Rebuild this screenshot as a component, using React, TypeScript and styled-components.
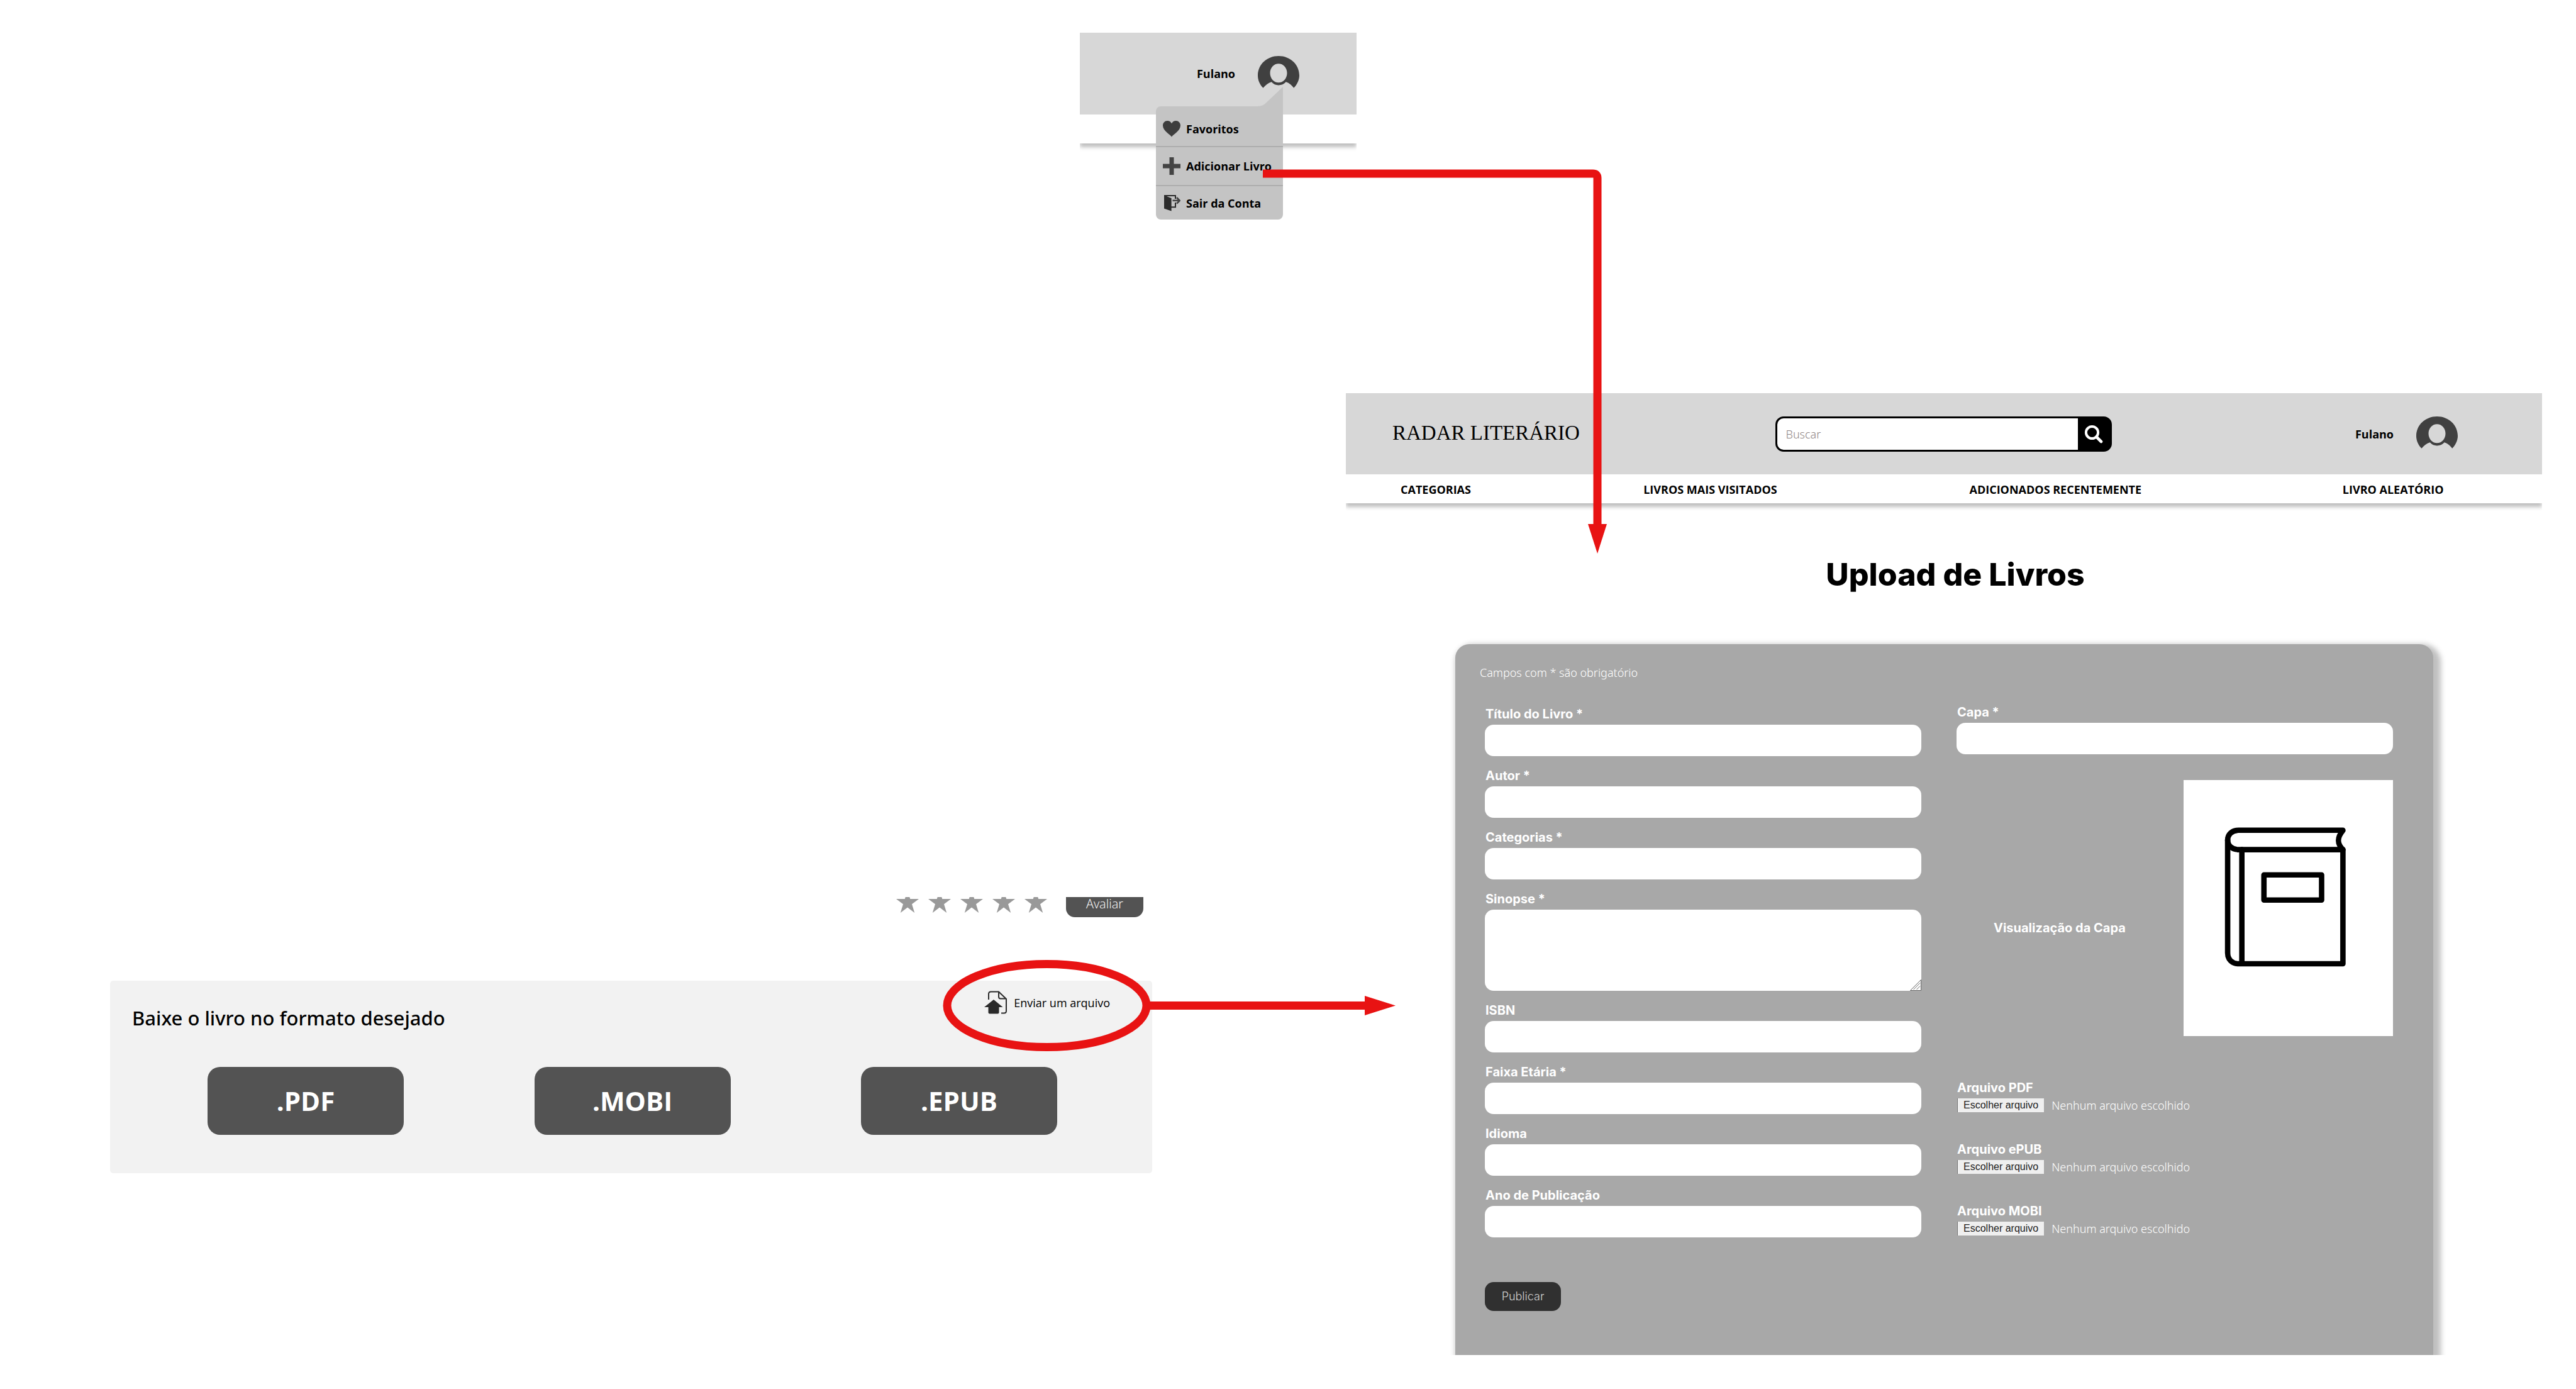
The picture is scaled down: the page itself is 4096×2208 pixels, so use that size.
import React, { useRef, useState } from "react";
import styled, { createGlobalStyle } from "styled-components";

const sans = `"Open Sans", "Noto Sans", sans-serif`;
const humanist = `"Noto Sans", "Open Sans", sans-serif`;
const grotesk = `Inter, "Liberation Sans", sans-serif`;
const red = "#e81313";

const GlobalStyle = createGlobalStyle`
  *, *::before, *::after { box-sizing: border-box; }
  body { margin: 0; background: #fff; color: #000; font-family: ${sans}; font-size: 18px; line-height: 24px; }
  h1, h2, p, ul { margin: 0; padding: 0; }
  ul { list-style: none; }
  button, input, textarea { font: inherit; margin: 0; border: 0; }
  button { cursor: pointer; }
  a { color: inherit; text-decoration: none; }
  svg { display: block; flex: none; }
`;

/* ---------- board ---------- */

const Board = styled.main`
  position: relative;
  display: grid;
  grid-template-columns:
    minmax(0, 175fr) minmax(0, 1542fr) minmax(0, 115fr) minmax(0, 308fr)
    minmax(0, 17fr) minmax(0, 1885fr) minmax(0, 54fr);
  grid-template-rows: 573px auto;
  padding: 52px 0 54px;
`;

const MenuFrame = styled.section`
  grid-column: 3 / 6;
  grid-row: 1;
`;

const PageFrame = styled.section`
  grid-column: 5 / 7;
  grid-row: 2;
`;

const DownloadFrame = styled.section`
  grid-column: 2 / 4;
  grid-row: 2;
  padding-top: 801px;
`;

const Connectors = styled.svg`
  position: absolute;
  inset: 0;
  z-index: 2;
  width: 100%;
  height: 100%;
  pointer-events: none;
`;

/* ---------- site header ---------- */

const TopBar = styled.header`
  display: flex;
  align-items: center;
  justify-content: flex-end;
  height: 130px;
  padding-right: 91px;
  background: #d7d7d7;
`;

const SiteBar = styled.header`
  display: grid;
  grid-template-columns: 1fr 535px 1fr;
  align-items: center;
  height: 129px;
  padding: 0 134px 0 74px;
  background: #d7d7d7;
`;

const Brand = styled.a`
  padding-bottom: 3px;
  font-family: "Liberation Serif", serif;
  font-size: 33px;
  line-height: 40px;
  white-space: nowrap;
`;

const Search = styled.form`
  display: flex;
  height: 56px;
  margin: 0 -29px 0 29px;
  border: 3px solid #000;
  border-radius: 13px;
  background: #000;
  overflow: hidden;
`;

const SearchInput = styled.input`
  flex: 1;
  min-width: 0;
  padding: 0 14px;
  background: #fff;
  font-family: ${humanist};
  font-weight: 300;
  outline: none;
  &::placeholder { color: #8f8585; opacity: 1; }
`;

const SearchButton = styled.button`
  display: grid;
  place-items: center;
  width: 51px;
  padding: 0;
  background: #000;
`;

const Account = styled.button`
  display: flex;
  align-items: center;
  gap: 36px;
  justify-self: end;
  padding: 0;
  background: none;
  font-weight: 700;
`;

const NavBar = styled.nav`
  display: grid;
  grid-template-columns: 386fr 518fr 593fr 317fr;
  align-items: center;
  height: 46px;
  padding: 2px 0 0 87px;
  background: #fff;
  font-weight: 700;
  white-space: nowrap;
  box-shadow: 0 6px 6px rgba(0, 0, 0, 0.25);
  clip-path: inset(0 0 -20px 0);
`;

/* ---------- account menu ---------- */

const AccountAnchor = styled.div`
  position: relative;
  z-index: 1;
`;

const Menu = styled.ul`
  position: absolute;
  top: 80px;
  right: 26px;
  width: 202px;
  padding-top: 1px;
  border-radius: 8px 0 8px 8px;
  background: #c4c4c4;
  font-weight: 700;
`;

const MenuTail = styled.svg`
  position: absolute;
  right: 0;
  bottom: 100%;
`;

const MenuItem = styled.li`
  & + & { border-top: 2px solid #adadad; }
  a {
    display: grid;
    grid-template-columns: 28px 1fr;
    gap: 9px;
    align-items: center;
    height: 60px;
    padding-left: 11px;
    white-space: nowrap;
  }
  &:first-of-type a { height: 62px; padding-top: 8px; }
  &:last-of-type a { height: 53px; }
`;

/* ---------- upload page ---------- */

const Title = styled.h1`
  padding: 83px 0 80px 36px;
  font-family: ${grotesk};
  font-size: 50px;
  line-height: 61px;
  font-weight: 800;
  text-align: center;
`;

const UploadForm = styled.form`
  margin: 0 173px 0 174px;
  padding: 33px 64px 70px 47px;
  border-radius: 22px 22px 0 0;
  background: #a8a8a8;
  color: #fff;
  box-shadow: 6px 6px 9px 6px rgba(0, 0, 0, 0.25);
  clip-path: inset(-30px -40px 0 -30px);
`;

const Note = styled.p`
  margin-left: -8px;
  font-family: ${humanist};
  font-weight: 300;
`;

const Columns = styled.div`
  display: grid;
  grid-template-columns: 1fr 1fr;
  gap: 56px;
  padding-top: 39px;
`;

const FieldColumn = styled.div`
  display: flex;
  flex-direction: column;
  gap: 19px;
  padding-top: 3px;
`;

const FieldBox = styled.div`
  position: relative;
  display: flex;
  flex-direction: column;
  gap: 5px;
`;

const FieldLabel = styled.label`
  align-self: flex-start;
  padding-left: 1px;
  font-family: ${grotesk};
  font-size: 20px;
  font-weight: 700;
`;

const TextInput = styled.input`
  height: 50px;
  width: 100%;
  padding: 0 16px;
  border-radius: 14px;
  background: #fff;
`;

const TextArea = styled.textarea`
  display: block;
  height: 129px;
  width: 100%;
  padding: 12px 16px;
  border-radius: 14px;
  background: #fff;
  resize: none;
`;

const Grip = styled.svg`
  position: absolute;
  right: 0;
  bottom: 0;
`;

const CoverRow = styled.div`
  display: flex;
  align-items: center;
  justify-content: space-between;
  padding: 41px 0 70px 59px;
`;

const CoverCaption = styled.p`
  padding-top: 62px;
  font-family: ${grotesk};
  font-size: 20px;
  font-weight: 700;
`;

const Cover = styled.div`
  width: 333px;
  background: #fff;
`;

const FileList = styled.div`
  display: flex;
  flex-direction: column;
  gap: 47px;
`;

const FileRow = styled.div`
  display: flex;
  align-items: center;
  gap: 12px;
  height: 22px;
  padding-left: 1px;
  font-family: ${humanist};
  font-weight: 300;
`;

const FileButton = styled.button`
  height: 22px;
  padding: 0 9px;
  border-left: 1px solid #767676;
  background: #efefef;
  color: #222;
  font-family: "Liberation Sans", sans-serif;
  font-size: 16px;
  line-height: 22px;
  font-weight: 400;
`;

const Submit = styled.button`
  width: 121px;
  height: 46px;
  margin-top: 71px;
  border-radius: 14px;
  background: #303030;
  color: #d0d0d0;
  font-family: ${grotesk};
  font-weight: 300;
`;

/* ---------- download card ---------- */

const RatingRow = styled.div`
  display: flex;
  align-items: flex-end;
  justify-content: flex-end;
  gap: 30px;
  height: 32px;
  padding-right: 14px;
  overflow: hidden;
`;

const Stars = styled.div`
  display: flex;
  gap: 15px;
  button { padding: 0; background: none; }
`;

const RateButton = styled.button`
  width: 123px;
  height: 46px;
  flex: none;
  padding: 4px 0 0;
  border-radius: 14px;
  background: #535353;
  color: #fff;
  font-size: 20px;
  line-height: 20px;
  font-weight: 300;
`;

const Card = styled.article`
  margin-top: 101px;
  border-radius: 5px;
  background: #f2f2f2;
`;

const CardHead = styled.div`
  display: flex;
  justify-content: space-between;
  align-items: flex-start;
  padding: 16px 67px 0 35px;
`;

const CardTitle = styled.h2`
  padding-top: 21px;
  font-family: ${humanist};
  font-size: 31px;
  line-height: 44px;
  font-weight: 500;
`;

const SendLink = styled.a`
  display: flex;
  align-items: center;
  gap: 11px;
`;

const Formats = styled.div`
  display: flex;
  justify-content: space-between;
  padding: 56px 151px 61px 155px;
`;

const FormatButton = styled.button`
  flex: 0 1 312px;
  height: 108px;
  border-radius: 20px;
  background: #535353;
  color: #fff;
  font-size: 42px;
  font-weight: 700;
`;

/* ---------- drawings ---------- */

const Avatar = () => (
  <svg width="66" height="56" viewBox="0 0 66 56" aria-hidden="true">
    <path
      fill="#404040"
      fillRule="evenodd"
      d="M8.5 50.7C3 45.5 0 38 0 31C0 13.5 14.5 0 33 0S66 13.5 66 31C66 38 62.5 45.5 57.2 50.7C54 46.5 50 43 44.7 41.3C41.5 45 37.5 46.4 33 46.4S24.8 45 21.8 41.3C16.5 43 12 46.5 8.5 50.7ZM33 12.2C25.5 12.2 19.5 18.5 19.5 27C19.5 35.7 25.5 42.3 33 42.3S46.5 35.7 46.5 27C46.5 18.5 40.5 12.2 33 12.2Z"
    />
  </svg>
);

const Heart = () => (
  <svg width="28" height="26" viewBox="0 0 28 26" aria-hidden="true">
    <path fill="#3d3d3d" d="M14 25.5C11 21.5 0 16 0 7.6C0 3.2 3.2 0 7.2 0C10.2 0 12.6 1.6 14 4.2C15.4 1.6 17.8 0 20.8 0C24.8 0 28 3.2 28 7.6C28 16 17 21.5 14 25.5Z" />
  </svg>
);

const Plus = () => (
  <svg width="28" height="28" viewBox="0 0 28 28" aria-hidden="true">
    <path fill="#444" d="M10.5 0h7v10.5H28v7H17.5V28h-7V17.5H0v-7h10.5z" />
  </svg>
);

const Door = () => (
  <svg width="28" height="26" viewBox="0 0 28 26" aria-hidden="true">
    <path fill="#2b2b2b" d="M2 0.5L13.6 5V25.5L2 21.5Z" />
    <path fill="none" stroke="#2b2b2b" strokeWidth="2" d="M2 1H20V6M13 19.2H20V12" />
    <path fill="none" stroke="#444" strokeWidth="2.6" d="M15.5 8.8H26M22 4L26.8 8.8L22 13.6" />
  </svg>
);

const Lens = () => (
  <svg width="30" height="30" viewBox="0 0 30 30" fill="none" stroke="#fff" aria-hidden="true">
    <circle cx="12.5" cy="12.5" r="9.6" strokeWidth="4" />
    <path d="M19.5 19.5L27 27" strokeWidth="4.6" strokeLinecap="round" />
  </svg>
);

const Star = () => (
  <svg width="36" height="42" viewBox="0 0 36 42" aria-hidden="true">
    <path fill="#999" d="M18 0L22.3 13H36L25 21.3L29.2 35L18 26.5L6.8 35L11 21.3L0 13H13.7Z" />
  </svg>
);

const UploadFile = () => (
  <svg width="36" height="37" viewBox="0 0 36 37" aria-hidden="true">
    <path
      fill="none"
      stroke="#2b2b2b"
      strokeWidth="2"
      d="M7 14V5Q7 1.5 10.5 1.5H23L35 13V32Q35 35.5 31.5 35.5H27M23 1.5V9.5Q23 12.5 26 12.5H34.5"
    />
    <path fill="#2b2b2b" d="M15 14L29.5 26H23.5V34.5Q23.5 36.5 21.5 36.5H8.5Q6.5 36.5 6.5 34.5V26H0Z" />
  </svg>
);

const Book = () => (
  <svg width="100%" viewBox="0 0 333 407" fill="none" stroke="#000" strokeWidth="8.6" strokeLinecap="round" strokeLinejoin="round" aria-hidden="true">
    <path d="M253.4 79.8H87.4C77 79.8 70.1 86.5 70.1 95.2S77 110.6 87.4 110.6H253.4C244 101 243.5 92 253.4 80" />
    <path d="M70.1 95.2V275C70.1 285 77 292 87.4 292H253.4V110.6M92.7 110.6V292" />
    <path d="M127.8 150.7H219.5V190.8H127.8Z" />
  </svg>
);

/* ---------- pieces ---------- */

function Field({ id, label }: { id: string; label: string }) {
  return (
    <FieldBox>
      <FieldLabel htmlFor={id}>{label}</FieldLabel>
      <TextInput id={id} name={id} type="text" />
    </FieldBox>
  );
}

function FileField({ id, label }: { id: string; label: string }) {
  const input = useRef<HTMLInputElement>(null);
  const [name, setName] = useState("Nenhum arquivo escolhido");
  return (
    <FieldBox>
      <FieldLabel htmlFor={id}>{label}</FieldLabel>
      <FileRow>
        <input
          ref={input}
          id={id}
          type="file"
          hidden
          onChange={(e) => setName(e.target.files?.[0]?.name ?? "Nenhum arquivo escolhido")}
        />
        <FileButton type="button" onClick={() => input.current?.click()}>
          Escolher arquivo
        </FileButton>
        <span>{name}</span>
      </FileRow>
    </FieldBox>
  );
}

const menuItems = [
  { label: "Favoritos", icon: <Heart /> },
  { label: "Adicionar Livro", icon: <Plus /> },
  { label: "Sair da Conta", icon: <Door /> },
];

const navItems = ["CATEGORIAS", "LIVROS MAIS VISITADOS", "ADICIONADOS RECENTEMENTE", "LIVRO ALEATÓRIO"];

export default function App() {
  return (
    <>
      <GlobalStyle />
      <Board>
        <MenuFrame>
          <TopBar>
            <AccountAnchor>
              <Account type="button">
                <span>Fulano</span>
                <Avatar />
              </Account>
              <Menu>
                <MenuTail width="43" height="31" viewBox="0 0 43 31" aria-hidden="true">
                  <path fill="#c4c4c4" d="M0 31C7 31 11 30 15 26.5L43 0V31Z" />
                </MenuTail>
                {menuItems.map((m) => (
                  <MenuItem key={m.label}>
                    <a href="#">
                      {m.icon}
                      <span>{m.label}</span>
                    </a>
                  </MenuItem>
                ))}
              </Menu>
            </AccountAnchor>
          </TopBar>
          <NavBar />
        </MenuFrame>

        <PageFrame>
          <SiteBar>
            <Brand href="#">RADAR LITERÁRIO</Brand>
            <Search onSubmit={(e) => e.preventDefault()}>
              <SearchInput type="text" placeholder="Buscar" aria-label="Buscar" />
              <SearchButton type="submit" aria-label="Buscar">
                <Lens />
              </SearchButton>
            </Search>
            <Account type="button">
              <span>Fulano</span>
              <Avatar />
            </Account>
          </SiteBar>
          <NavBar>
            {navItems.map((n) => (
              <a href="#" key={n}>{n}</a>
            ))}
          </NavBar>

          <Title>Upload de Livros</Title>

          <UploadForm onSubmit={(e) => e.preventDefault()}>
            <Note>Campos com * são obrigatório</Note>
            <Columns>
              <FieldColumn>
                <Field id="titulo" label="Título do Livro *" />
                <Field id="autor" label="Autor *" />
                <Field id="categorias" label="Categorias *" />
                <FieldBox>
                  <FieldLabel htmlFor="sinopse">Sinopse *</FieldLabel>
                  <TextArea id="sinopse" name="sinopse" />
                  <Grip width="18" height="18" viewBox="0 0 18 18" fill="none" stroke="#666" aria-hidden="true">
                    <path fill="#fff" d="M0.5 17.5L17.5 0.5V17.5Z" />
                    <path d="M5.5 16L16 5.5M10.5 16L16 10.5" />
                  </Grip>
                </FieldBox>
                <Field id="isbn" label="ISBN" />
                <Field id="faixa" label="Faixa Etária *" />
                <Field id="idioma" label="Idioma" />
                <Field id="ano" label="Ano de Publicação" />
              </FieldColumn>
              <div>
                <Field id="capa" label="Capa *" />
                <CoverRow>
                  <CoverCaption>Visualização da Capa</CoverCaption>
                  <Cover>
                    <Book />
                  </Cover>
                </CoverRow>
                <FileList>
                  <FileField id="pdf" label="Arquivo PDF" />
                  <FileField id="epub" label="Arquivo ePUB" />
                  <FileField id="mobi" label="Arquivo MOBI" />
                </FileList>
              </div>
            </Columns>
            <Submit type="submit">Publicar</Submit>
          </UploadForm>
        </PageFrame>

        <DownloadFrame>
          <RatingRow>
            <Stars>
              {[1, 2, 3, 4, 5].map((n) => (
                <button type="button" key={n} aria-label={String(n)}>
                  <Star />
                </button>
              ))}
            </Stars>
            <RateButton type="button">Avaliar</RateButton>
          </RatingRow>
          <Card>
            <CardHead>
              <CardTitle>Baixe o livro no formato desejado</CardTitle>
              <SendLink href="#">
                <UploadFile />
                <span>Enviar um arquivo</span>
              </SendLink>
            </CardHead>
            <Formats>
              <FormatButton type="button">.PDF</FormatButton>
              <FormatButton type="button">.MOBI</FormatButton>
              <FormatButton type="button">.EPUB</FormatButton>
            </Formats>
          </Card>
        </DownloadFrame>

        <Connectors viewBox="0 0 4096 2208" preserveAspectRatio="none" fill="none" stroke={red} strokeWidth="13" aria-hidden="true">
          <path d="M2008 276H2533Q2540 276 2540 283V834" />
          <path fill={red} stroke="none" d="M2525 833H2555L2540 880Z" />
          <ellipse cx="1664.5" cy="1598.5" rx="158.5" ry="66" />
          <path d="M1826 1598.5H2172" />
          <path fill={red} stroke="none" d="M2170 1583L2219 1598.5L2170 1614Z" />
        </Connectors>
      </Board>
    </>
  );
}
